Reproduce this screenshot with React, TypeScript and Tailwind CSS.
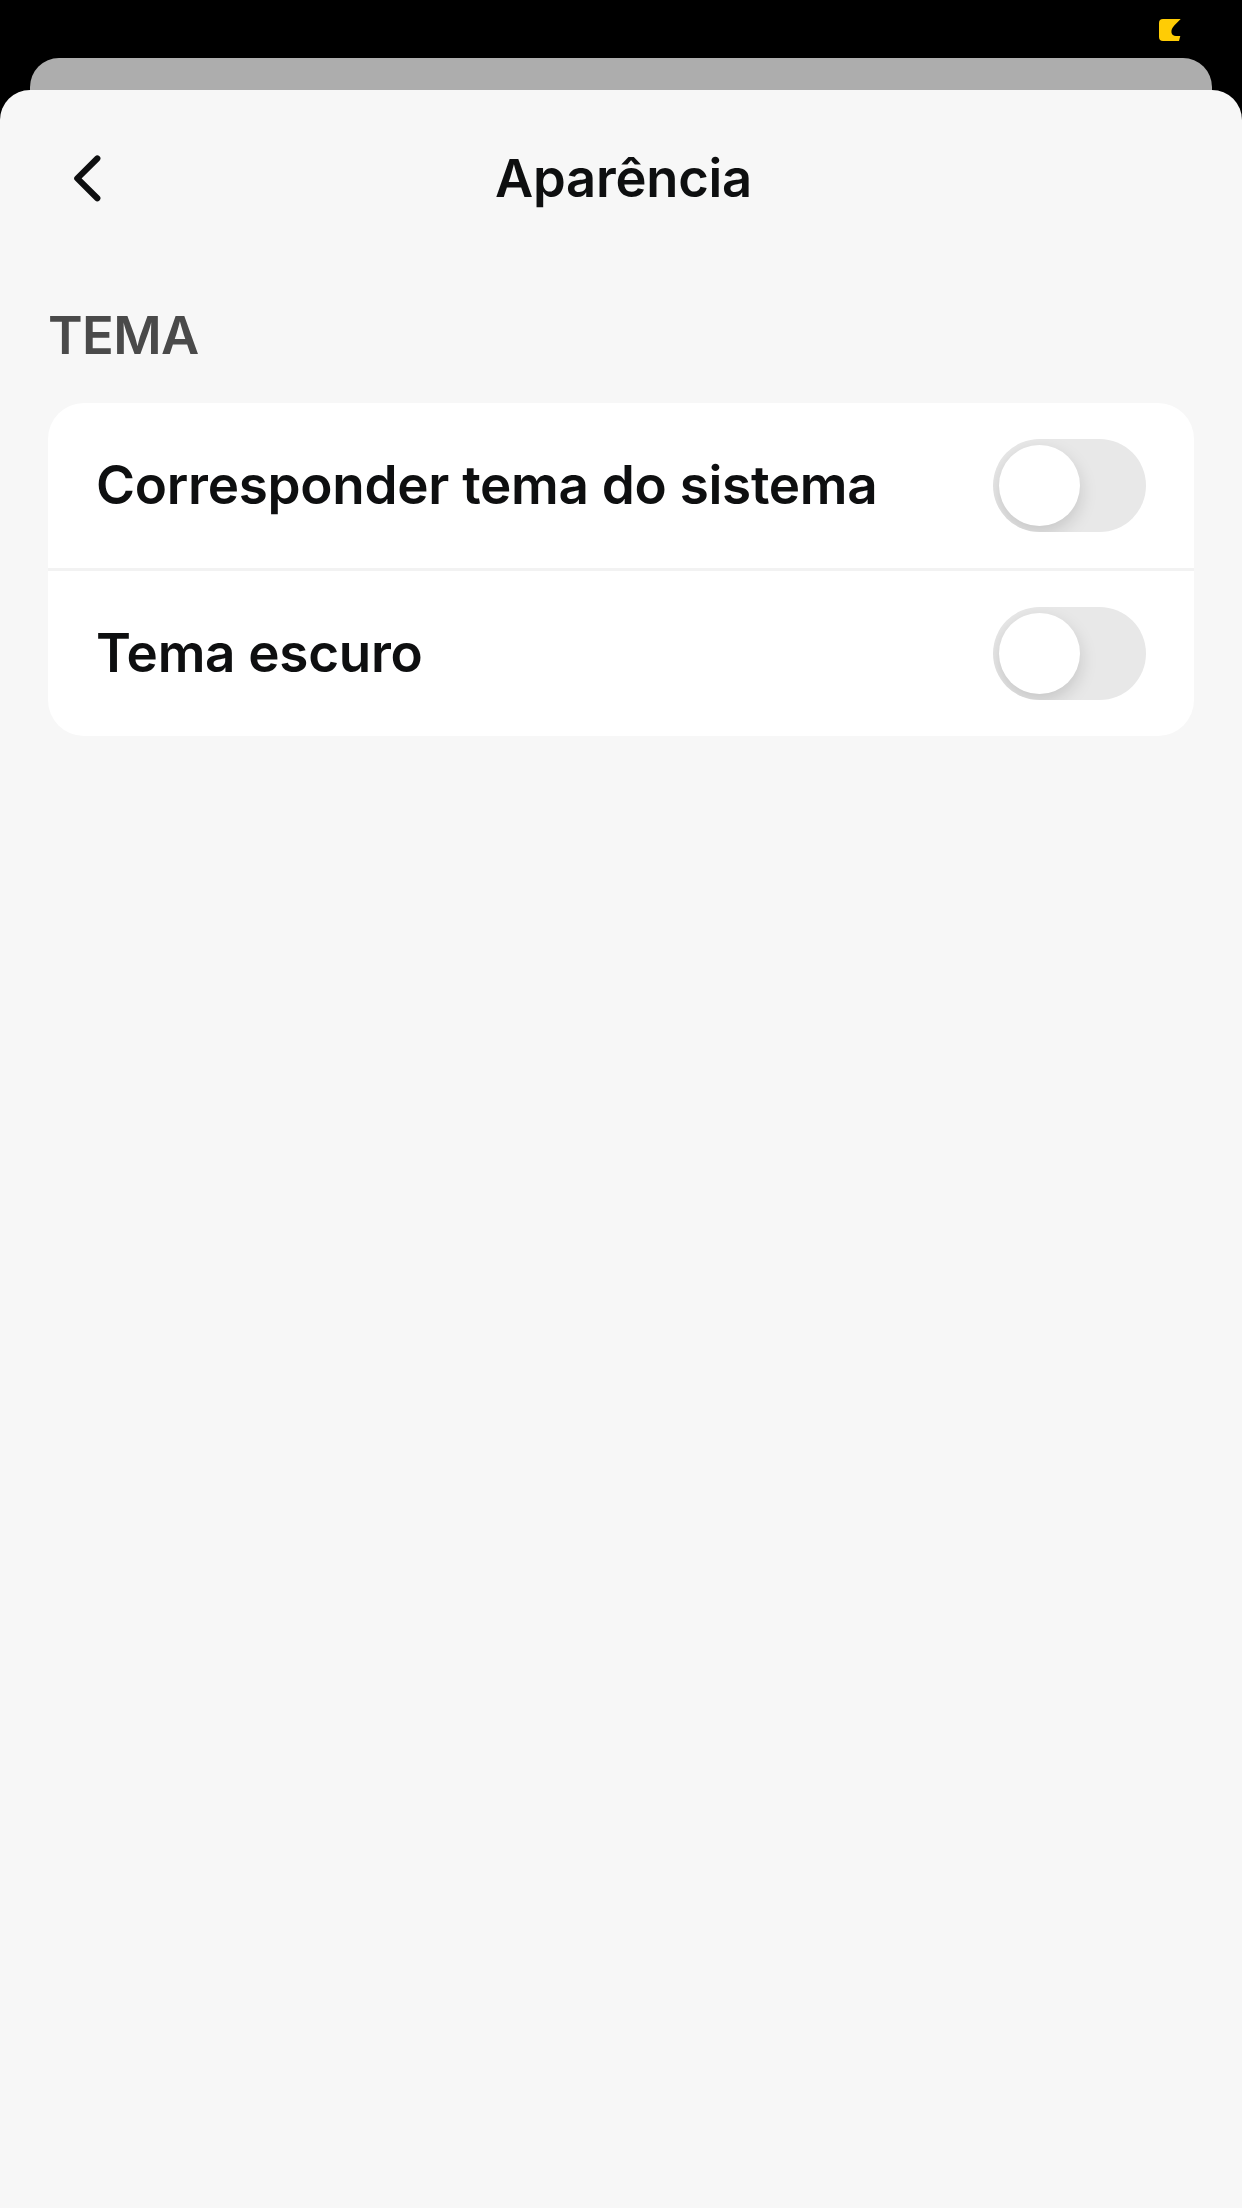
const Toggle = ({ label }: { label: string }) => (
  <button role="switch" aria-checked={false} aria-label={label} className="h-[93px] w-[153px] shrink-0 overflow-hidden rounded-full bg-[#e8e8e8] p-[6px]">
    <span className="block size-[81px] rounded-full bg-white shadow-[0_7px_18px_rgba(0,0,0,0.15)]" />
  </button>
);

const Row = ({ label }: { label: string }) => (
  <div className="flex h-[165px] items-center justify-between px-[48px]">
    <span className="pb-[2px] text-[53px] font-semibold leading-[66px] tracking-[-0.28px] text-[#0e0f10]">{label}</span>
    <Toggle label={label} />
  </div>
);

export default function App() {
  return (
    <div className="flex h-[2208px] w-[1242px] flex-col overflow-hidden bg-black font-['Inter',sans-serif]">
      <div className="flex h-[58px] shrink-0 justify-end pr-[61px] pt-[19px]">
        <svg width="22" height="22" viewBox="0 0 22 22">
          <path d="M4 0H21.7L15.5 6.3C10.5 11.3 12 17 17 17H21.3L20 22H4Q0 22 0 18V4Q0 0 4 0Z" fill="#ffcc05" />
        </svg>
      </div>
      <div className="mx-[30px] h-[62px] shrink-0 rounded-t-[29px] bg-[#adadad]" />
      <main className="relative -mt-[30px] flex-1 rounded-t-[30px] bg-[#f7f7f7] px-[48px]">
        <header className="grid h-[178px] grid-cols-[83px_1fr_78px] items-center">
          <button aria-label="Voltar" className="pl-[24px]">
            <svg width="32" height="50" viewBox="0 0 32 50" fill="none" stroke="#0e0f10" strokeWidth="6.2" strokeLinecap="round" strokeLinejoin="round">
              <path d="M25.3 4.5L5.3 24.4L25.3 44.3" />
            </svg>
          </button>
          <h1 className="pb-[2px] text-center text-[52.5px] font-semibold leading-[64px] tracking-[-0.2px] text-[#0e0f10]">Aparência</h1>
        </header>
        <h2 className="mt-[34px] text-[52.5px] font-semibold leading-[66px] tracking-[-0.6px] text-[#4a4a4a]">TEMA</h2>
        <section className="mt-[35px] overflow-hidden rounded-[36px] bg-white">
          <Row label="Corresponder tema do sistema" />
          <div className="h-[3px] bg-[#f2f2f2]" />
          <Row label="Tema escuro" />
        </section>
      </main>
    </div>
  );
}
